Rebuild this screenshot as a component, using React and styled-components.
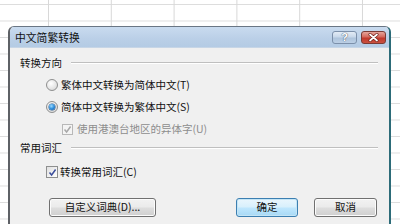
import React from "react";
import styled, { createGlobalStyle, css } from "styled-components";

const Global = createGlobalStyle`
  html, body { margin: 0; padding: 0; background: #fff; }
  body { font-family: "Noto Sans CJK SC", "Noto Sans", sans-serif; }
`;

const Page = styled.div`
  width: 400px;
  height: 224px;
  overflow: hidden;
  box-sizing: border-box;
  padding: 26px 0 0 8px;
  background-color: #fff;
  background-image:
    linear-gradient(to right, #d8d8d8 1px, transparent 1px),
    linear-gradient(to bottom, #dcdcdc 1px, transparent 1px);
  background-size: 62.8px 16.5px;
  background-position: 48px 4px;
`;

const Dialog = styled.div`
  width: 383px;
  height: 230px;
  box-sizing: border-box;
  border-top: 1px solid #6a7684;
  border-left: 2px solid #5e6166;
  border-right: 2px solid #2c6b78;
  border-radius: 6px 6px 0 0;
  background: #f0f0f0;
  overflow: hidden;
  display: flex;
  flex-direction: column;
`;

const TitleBar = styled.div`
  height: 20px;
  flex: none;
  display: flex;
  align-items: center;
  padding: 0 3px 0 5px;
  background: linear-gradient(#c9dbef, #bacfe7 60%, #b4cbe4);
  border-bottom: 1px solid #c7d6e6;
`;

const Title = styled.span`
  flex: 1;
  font-size: 10.8px;
  color: #111;
  line-height: 1;
`;

const CaptionButton = styled.div`
  width: 25px;
  height: 13px;
  box-sizing: border-box;
  border-radius: 3px;
  display: flex;
  align-items: center;
  justify-content: center;
  margin-left: 4px;
  ${(p) =>
    p.$close
      ? css`
          border: 1px solid #7a3a34;
          background: linear-gradient(#e6a59b, #d4685c 45%, #c1392d 55%, #c9503f);
        `
      : css`
          border: 1px solid #7c90aa;
          background: linear-gradient(#e3ecf6, #c8d8ea 45%, #aec4dc 55%, #bcd0e6);
        `}
`;

const HelpMark = styled.span`
  font-family: "Liberation Sans", sans-serif;
  font-weight: bold;
  font-size: 11px;
  line-height: 1;
  color: #fff;
  text-shadow: 0 0 1px #4a5a70, 0 0 1px #4a5a70;
`;

const Body = styled.div`
  flex: 1;
  padding: 8px 11px 0 10px;
  display: flex;
  flex-direction: column;
  font-size: 10.5px;
  color: #111;
`;

const GroupHeader = styled.div`
  height: 14px;
  display: flex;
  align-items: center;
  gap: 9px;
  margin-top: ${(p) => p.$mt || 0}px;
`;

const HeaderText = styled.span`
  line-height: 1;
`;

const Rule = styled.div`
  flex: 1;
  height: 0;
  border-top: 1px solid #bfbfbf;
  border-bottom: 1px solid #fff;
`;

const Options = styled.div`
  display: flex;
  flex-direction: column;
  margin-left: ${(p) => p.$ml ?? 26}px;
  margin-top: ${(p) => p.$mt || 0}px;
`;

const OptionRow = styled.div`
  height: 22px;
  display: flex;
  align-items: center;
  gap: ${(p) => p.$gap ?? 3}px;
  padding-left: ${(p) => p.$indent || 0}px;
  color: ${(p) => (p.$disabled ? "#8d8d8d" : "#111")};
`;

const Label = styled.span`
  line-height: 1;
  white-space: nowrap;
`;

const RadioCircle = styled.span`
  width: 12px;
  height: 12px;
  box-sizing: border-box;
  border-radius: 50%;
  border: 1px solid #8e8f8f;
  background: radial-gradient(circle at 40% 35%, #ffffff, #e4e4e4 60%, #cfcfcf);
  display: flex;
  align-items: center;
  justify-content: center;
  flex: none;
`;

const RadioDot = styled.span`
  width: 6px;
  height: 6px;
  border-radius: 50%;
  background: radial-gradient(circle at 40% 35%, #9fdcff, #2f8fdc 50%, #0f4f9a);
  box-shadow: 0 0 0 0.5px #1c4f82;
`;

const CheckBox = styled.span`
  width: ${(p) => p.$size || 12}px;
  height: ${(p) => p.$size || 12}px;
  box-sizing: border-box;
  border: 1px solid ${(p) => (p.$disabled ? "#b8b8b8" : "#8e8f8f")};
  background: ${(p) =>
    p.$disabled ? "#f4f4f4" : "linear-gradient(135deg, #e0e0e0, #ffffff)"};
  display: flex;
  align-items: center;
  justify-content: center;
  flex: none;
`;

const Buttons = styled.div`
  display: flex;
  align-items: center;
  margin-top: 15px;
  margin-left: 29px;
  padding-right: 1px;
`;

const Button = styled.div`
  height: 19px;
  width: ${(p) => p.$w}px;
  box-sizing: border-box;
  margin-left: ${(p) => p.$ml || 0}px;
  border-radius: 3px;
  display: flex;
  align-items: center;
  justify-content: center;
  font-size: 10.5px;
  line-height: 1;
  color: #111;
  ${(p) =>
    p.$default
      ? css`
          border: 1px solid #3c7fb1;
          background: linear-gradient(#eaf6fd, #d9f0fc 45%, #bee6fd 55%, #a7d9f5);
          box-shadow: inset 0 0 0 1px #c4e5f6;
        `
      : css`
          border: 1px solid #707070;
          background: linear-gradient(#f2f2f2, #ebebeb 45%, #dddddd 55%, #cfcfcf);
          box-shadow: inset 0 0 0 1px #fcfcfc;
        `}
`;

const Spacer = styled.div`
  flex: 1;
`;

function Check({ color }) {
  return (
    <svg width="9" height="9" viewBox="0 0 9 9">
      <path d="M1.5 4.5 L3.6 7 L7.6 1.5" fill="none" stroke={color} strokeWidth="1.5" />
    </svg>
  );
}

function CloseGlyph() {
  return (
    <svg width="11" height="9" viewBox="0 0 11 9">
      <path d="M2 1.5 L9 7.5 M9 1.5 L2 7.5" stroke="#6b1d16" strokeWidth="3" strokeLinecap="round" />
      <path d="M2 1.5 L9 7.5 M9 1.5 L2 7.5" stroke="#fff" strokeWidth="1.7" strokeLinecap="round" />
    </svg>
  );
}

export default function App() {
  return (
    <>
      <Global />
      <Page>
        <Dialog>
          <TitleBar>
            <Title>中文简繁转换</Title>
            <CaptionButton>
              <HelpMark>?</HelpMark>
            </CaptionButton>
            <CaptionButton $close>
              <CloseGlyph />
            </CaptionButton>
          </TitleBar>
          <Body>
            <GroupHeader>
              <HeaderText>转换方向</HeaderText>
              <Rule />
            </GroupHeader>
            <Options $mt={4}>
              <OptionRow>
                <RadioCircle />
                <Label>繁体中文转换为简体中文(T)</Label>
              </OptionRow>
              <OptionRow>
                <RadioCircle>
                  <RadioDot />
                </RadioCircle>
                <Label>简体中文转换为繁体中文(S)</Label>
              </OptionRow>
              <OptionRow $indent={16} $gap={4} $disabled>
                <CheckBox $disabled $size={11}>
                  <Check color="#a8a8a8" />
                </CheckBox>
                <Label>使用港澳台地区的异体字(U)</Label>
              </OptionRow>
            </Options>
            <GroupHeader $mt={1}>
              <HeaderText>常用词汇</HeaderText>
              <Rule />
            </GroupHeader>
            <Options $mt={6}>
              <OptionRow $gap={2}>
                <CheckBox>
                  <Check color="#3b4e9c" />
                </CheckBox>
                <Label>转换常用词汇(C)</Label>
              </OptionRow>
            </Options>
            <Buttons>
              <Button $w={107}>自定义词典(D)...</Button>
              <Spacer />
              <Button $w={62} $default>确定</Button>
              <Button $w={63} $ml={16}>取消</Button>
            </Buttons>
          </Body>
        </Dialog>
      </Page>
    </>
  );
}
